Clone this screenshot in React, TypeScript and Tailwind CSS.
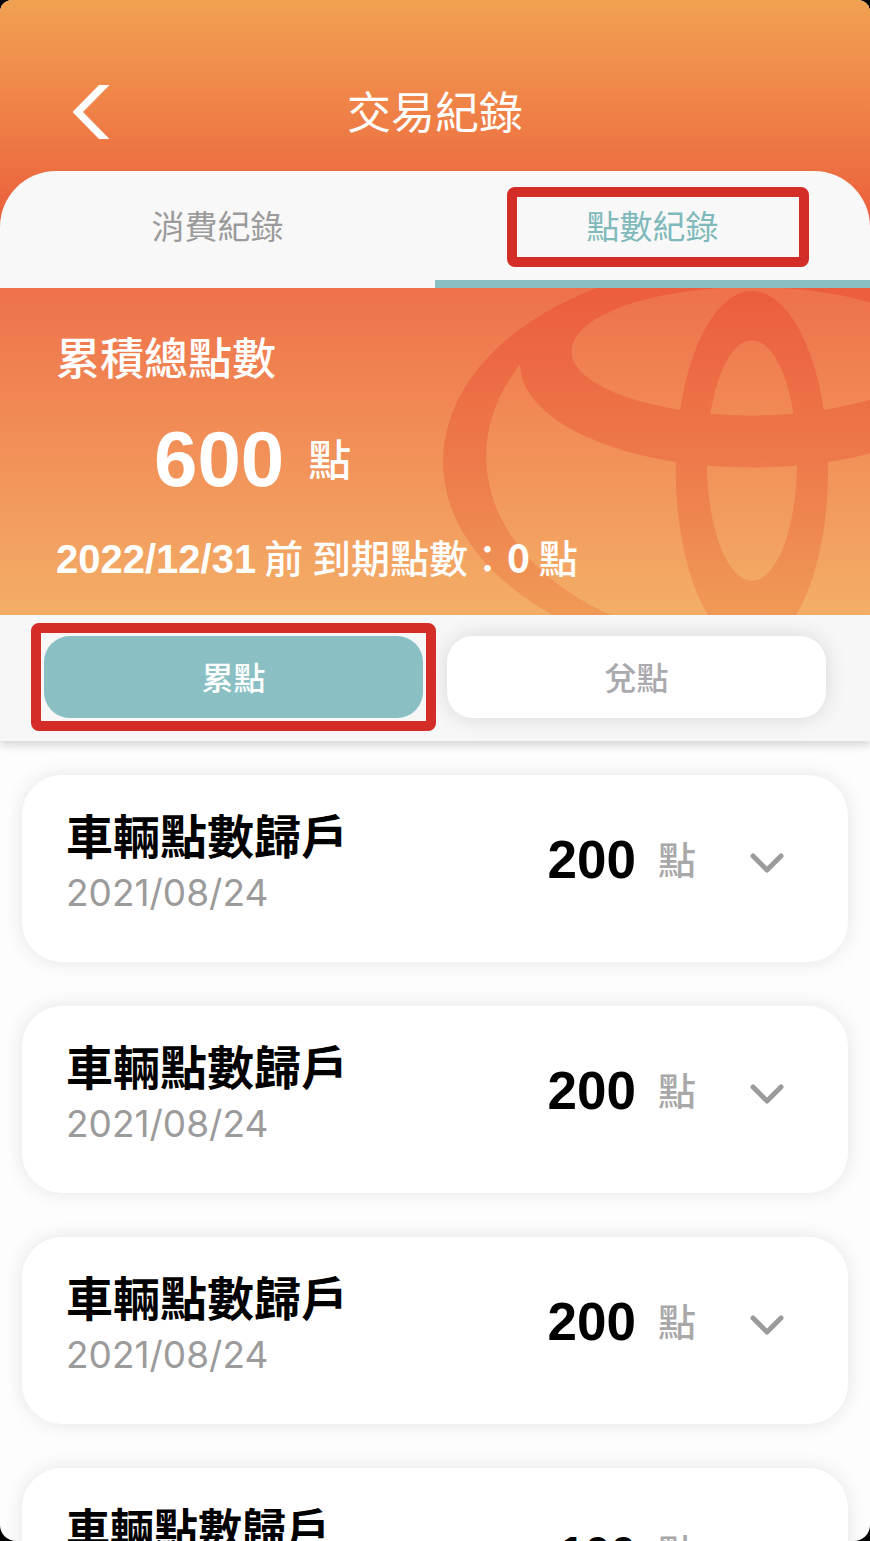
import { useState } from 'react';

type Mode = 'earn' | 'redeem';

const records = [
  { id: 1, title: '車輛點數歸戶', date: '2021/08/24', points: 200 },
  { id: 2, title: '車輛點數歸戶', date: '2021/08/24', points: 200 },
  { id: 3, title: '車輛點數歸戶', date: '2021/08/24', points: 200 },
  { id: 4, title: '車輛點數歸戶', date: '2021/08/24', points: 100, compact: true },
];

const BrandMark = () => (
  <svg
    className="absolute right-0 top-0 h-full"
    viewBox="0 0 430 326"
    preserveAspectRatio="xMaxYMin slice"
    aria-hidden="true"
  >
    <defs>
      <linearGradient id="mark-fill" x1="0" y1="0" x2="0" y2="1">
        <stop offset="0" stopColor="#ec5d3d" />
        <stop offset="0.5" stopColor="#ed784a" />
        <stop offset="1" stopColor="#f09a57" />
      </linearGradient>
      <mask id="mark-shape" maskUnits="userSpaceOnUse" x="0" y="0" width="430" height="326">
        <ellipse cx="312" cy="173" rx="308" ry="200" fill="white" />
        <path d="M81 76A265 187 0 1 0 543 76A231 103 0 0 1 81 76Z" fill="black" />
        <ellipse cx="312" cy="63" rx="180" ry="64" fill="black" />
        <ellipse cx="312" cy="181" rx="76" ry="178" fill="white" />
        <ellipse cx="312" cy="172" rx="45" ry="120" fill="black" />
        {/* crossbar passes in front of the vertical ring */}
        <path
          d="M81 76A231 103 0 0 0 543 76L492 63A180 64 0 0 1 132 63Z"
          fill="white"
        />
      </mask>
    </defs>
    <rect width="430" height="326" fill="url(#mark-fill)" mask="url(#mark-shape)" />
  </svg>
);

const RecordCard = ({ title, date, points, compact }: { title: string; date: string; points: number; compact?: boolean }) => {
  const [open, setOpen] = useState(false);

  return (
    <li className="flex h-[187px] shrink-0 items-start rounded-[40px] bg-white pl-11 pr-16 shadow-[0_0_20px_rgba(0,0,0,0.1)]">
      <div className="flex-1 pt-[34px]">
        <h2
          className={
            compact
              ? 'text-[44px] font-bold leading-[50px] text-black'
              : 'text-[47px] font-bold leading-[50px] text-black'
          }
        >
          {title}
        </h2>
        <p className="pt-1.5 font-[Inter,sans-serif] text-[37px] leading-[56px] text-[#9b9b9b]">{date}</p>
      </div>
      <div className="flex items-center gap-[22px] pt-[55px]">
        <span
          className={
            compact
              ? "font-['Liberation_Sans',sans-serif] text-[46px] font-bold leading-[60px] text-black"
              : "font-['Liberation_Sans',sans-serif] text-[53px] font-bold leading-[60px] text-black"
          }
        >
          {points}
        </span>
        <span className="pb-1 text-[38px] font-medium leading-[56px] text-[#a8a8a8]">點</span>
      </div>
      <button
        type="button"
        className="ml-[54px] mt-[76px]"
        aria-label="展開明細"
        aria-expanded={open}
        onClick={() => setOpen(!open)}
      >
        <svg
          width="34"
          height="24"
          viewBox="0 0 34 24"
          fill="none"
          stroke="#9b9b9b"
          strokeWidth="5"
          strokeLinecap="round"
          strokeLinejoin="round"
        >
          <path d="M3 5L17 19L31 5" />
        </svg>
      </button>
    </li>
  );
};

const App = () => {
  const [mode, setMode] = useState<Mode>('earn');

  const pill = 'h-[82px] flex-1 rounded-[26px] pb-0.5 text-[32px] font-medium';
  const active = 'bg-[#8ac0c4] text-white';
  const idle = 'bg-white text-[#a9a9ae] shadow-[0_0_22px_rgba(0,0,0,0.13)]';

  return (
    <div className="h-screen bg-black font-['Noto_Sans_CJK_TC',sans-serif]">
      <div className="flex h-full flex-col overflow-hidden rounded-t-xl rounded-b-2xl bg-[#fdfdfd]">
        <div className="shrink-0 bg-linear-to-b from-[#f1a152] to-[#ea5a3b] to-[235px]">
          <header className="grid h-[171px] grid-cols-[1fr_auto_1fr] items-center px-[72px] pt-[52px]">
            <button type="button" aria-label="返回" className="justify-self-start">
              <svg width="38" height="54" viewBox="0 0 38 54" fill="white">
                <path d="M27 0H37.500L11 27L37.500 54H27L0.500 27Z" />
              </svg>
            </button>
            <h1 className="pb-1 text-[44px] leading-[60px] text-white">交易紀錄</h1>
          </header>
          <nav className="flex h-[117px] rounded-t-[56px] bg-[#f8f8f8] text-[33px]">
            <a href="#spend" className="flex flex-1 items-center justify-center border-b-8 border-transparent text-[#9b9b9b]">
              消費紀錄
            </a>
            <a
              href="#points"
              className="relative flex flex-1 items-center justify-center border-b-8 border-[#8ac0c4] text-[#7fb9bb]"
            >
              點數紀錄
              <span className="absolute bottom-[13px] left-[72px] right-[61px] top-4 rounded-lg border-10 border-[#d42c26]" />
            </a>
          </nav>
        </div>

        <section className="relative shrink-0 bg-linear-to-b from-[#ee714a] to-[#f3ae67] text-white">
          <BrandMark />
          <div className="relative flex h-[327px] flex-col px-14 pt-[38px] font-medium">
            <h2 className="text-[44px] leading-[60px]">累積總點數</h2>
            <p className="flex items-center gap-6 pl-[98px] pt-7">
              <span className="font-['Liberation_Sans',sans-serif] text-[78px] font-bold leading-[90px]">600</span>
              <span className="pb-1 text-[43px] leading-[60px]">點</span>
            </p>
            <p className="flex items-baseline gap-2 pt-[22px] text-[39px] leading-[60px]">
              <span className="font-['Liberation_Sans',sans-serif] text-[40px] font-bold">2022/12/31</span>
              <span>
                前 到期點數：<b className="font-bold">0</b> 點
              </span>
            </p>
          </div>
        </section>

        <div className="relative flex shrink-0 gap-6 bg-[#f7f7f7] px-11 pb-[23px] pt-[21px] shadow-[0_5px_8px_rgba(0,0,0,0.14)]">
          <div className="relative flex flex-1">
            <button type="button" className={`${pill} ${mode === 'earn' ? active : idle}`} onClick={() => setMode('earn')}>
              累點
            </button>
            <span className="pointer-events-none absolute -inset-[13px] rounded-lg border-10 border-[#d42c26]" />
          </div>
          <button type="button" className={`${pill} ${mode === 'redeem' ? active : idle}`} onClick={() => setMode('redeem')}>
            兌點
          </button>
        </div>

        <ul className="flex min-h-0 flex-1 flex-col gap-11 overflow-hidden px-[22px] pt-[34px]">
          {records.map((record) => (
            <RecordCard
              key={record.id}
              title={record.title}
              date={record.date}
              points={record.points}
              compact={record.compact}
            />
          ))}
        </ul>
      </div>
    </div>
  );
};

export default App;
